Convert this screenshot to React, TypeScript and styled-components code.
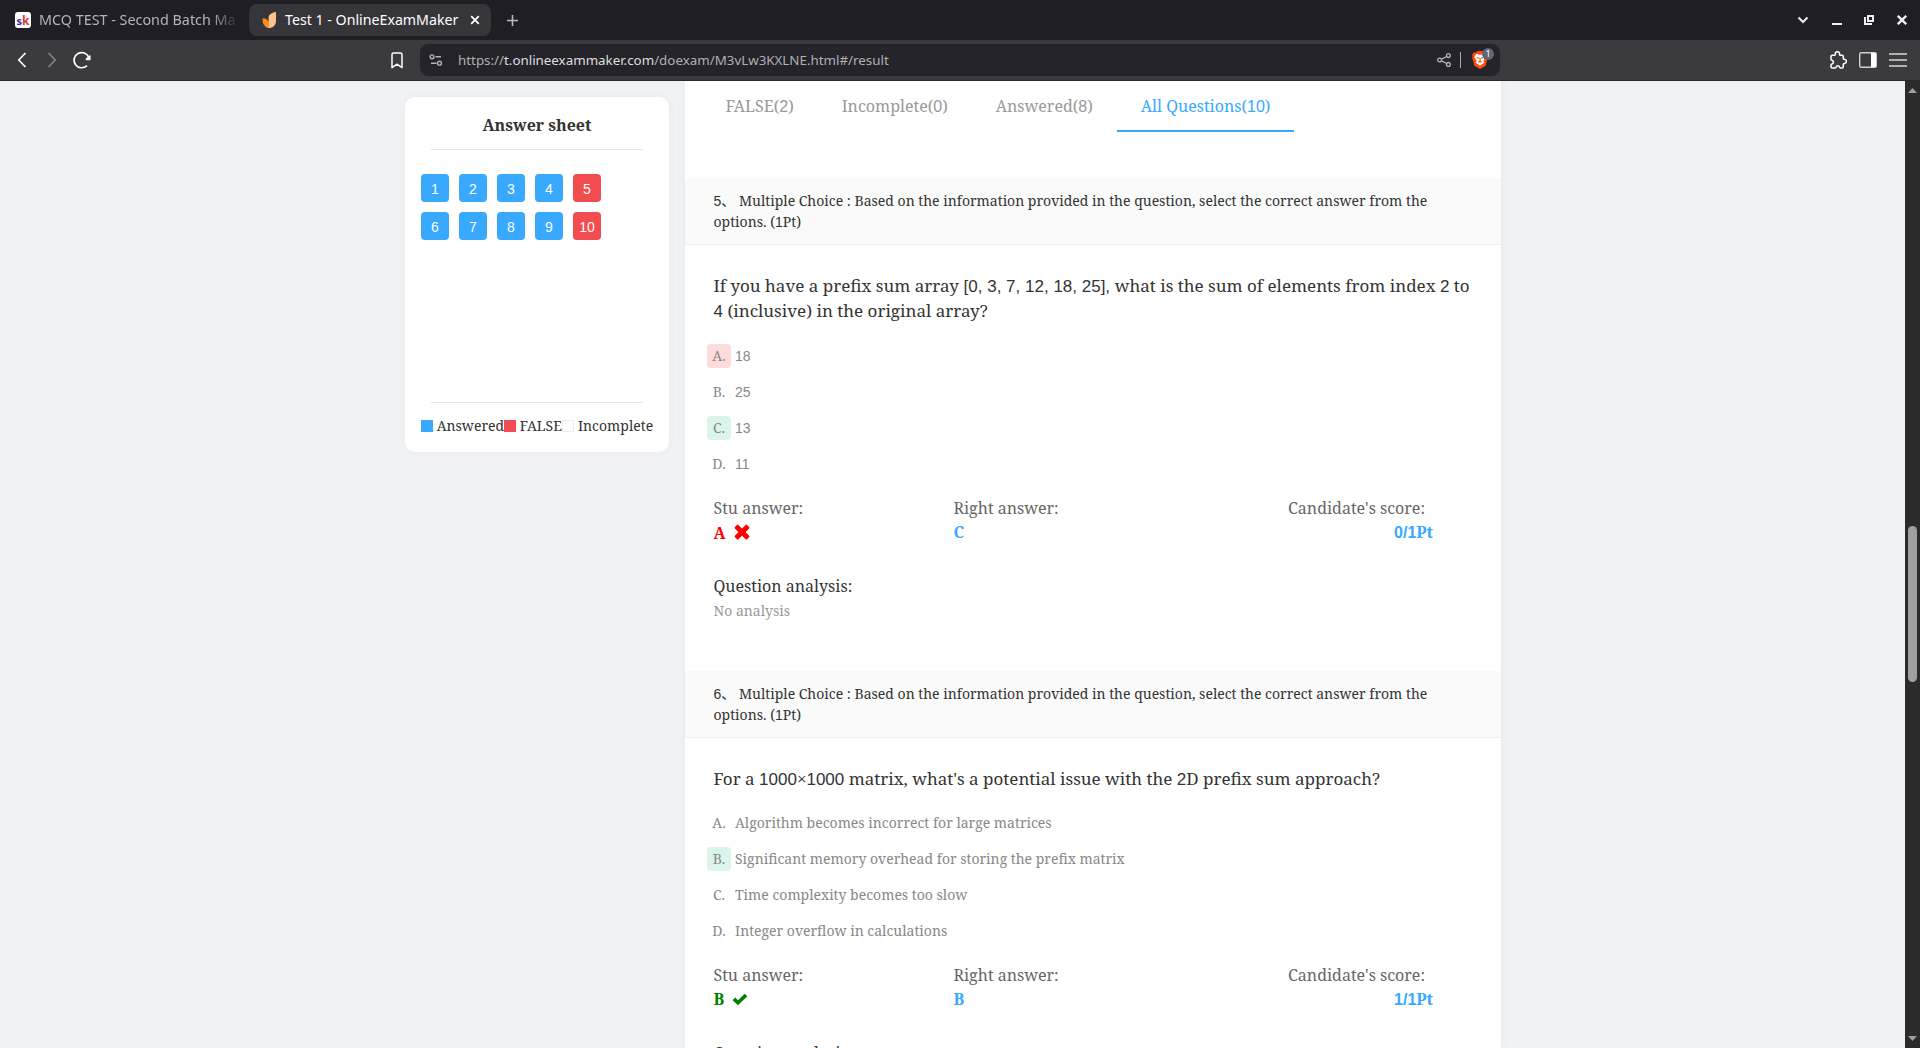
import React from "react";
import styled, { createGlobalStyle } from "styled-components";

const SERIF = `"Noto Serif", "Noto Sans CJK SC", serif`;
const SANS = `"Liberation Sans", Arial, sans-serif`;
const UI = `"Noto Sans", sans-serif`;

const GlobalStyle = createGlobalStyle`
  *, *::before, *::after { box-sizing: border-box; }
  body { margin: 0; overflow: hidden; background: #f0f2f5; }
`;

const Window = styled.div`
  width: 1920px;
  height: 1048px;
  display: flex;
  flex-direction: column;
  overflow: hidden;
  font-family: ${SERIF};
  color: #333;
`;

/* ---------- browser chrome ---------- */

const TabStrip = styled.div`
  flex: none;
  height: 40px;
  display: flex;
  align-items: center;
  background: #1f1e24;
  font-family: ${UI};
`;

const Tab = styled.div<{ $active?: boolean }>`
  width: ${p => (p.$active ? "242px" : "249px")};
  height: 32px;
  padding-left: ${p => (p.$active ? "13px" : "15px")};
  display: flex;
  align-items: center;
  border-radius: 8px;
  background: ${p => (p.$active ? "#363539" : "transparent")};
  svg { flex: none; }
`;

const TabTitle = styled.div<{ $active?: boolean }>`
  margin-left: 8px;
  width: ${p => (p.$active ? "177px" : "198px")};
  overflow: hidden;
  white-space: nowrap;
  font-size: ${p => (p.$active ? "14.2px" : "14.35px")};
  line-height: 24px;
  color: ${p => (p.$active ? "#fff" : "#b4b4b6")};
  mask-image: ${p => (p.$active ? "none" : "linear-gradient(to right, #000 172px, transparent 200px)")};
`;

const TabClose = styled.span`
  display: flex;
  margin-left: 7.5px;
`;

const NewTab = styled.span`
  display: flex;
  margin-left: 15.5px;
`;

const WindowControls = styled.div`
  margin-left: auto;
  padding-right: 13px;
  display: flex;
  align-items: center;
  gap: 22.6px;
  svg { display: block; }
`;

const Toolbar = styled.div`
  flex: none;
  height: 41px;
  display: flex;
  align-items: center;
  background: #3b3a3f;
  border-bottom: 1px solid #2a292d;
  svg { flex: none; display: block; }
`;

const NavButtons = styled.div`
  width: 391px;
  padding-left: 17px;
  display: flex;
  align-items: center;
  gap: 20px;
`;

const ReloadSlot = styled.span`
  display: flex;
  margin-left: -4px;
`;

const AddressBar = styled.div`
  width: 1080px;
  height: 32px;
  margin-left: 17px;
  padding: 0 6px 0 9px;
  display: flex;
  align-items: center;
  border-radius: 8px;
  background: #242329;
`;

const Url = styled.div`
  margin-left: 15px;
  flex: 1;
  font: 13.35px ${UI};
  color: #b0b0b3;
  white-space: nowrap;
`;

const UrlHost = styled.span`
  color: #dededf;
`;

const BarDivider = styled.span`
  width: 1px;
  height: 16px;
  margin: 0 11px 0 9px;
  background: #a8a8aa;
`;

const Shield = styled.span`
  position: relative;
  width: 22px;
  height: 18px;
`;

const ShieldBadge = styled.span`
  position: absolute;
  top: -3px;
  left: 10px;
  width: 12px;
  height: 12px;
  border-radius: 6px;
  background: #636573;
  color: #fff;
  font: 9px/12px ${UI};
  text-align: center;
`;

const ToolbarActions = styled.div`
  margin-left: auto;
  padding-right: 13px;
  display: flex;
  align-items: center;
  gap: 12px;
`;

/* ---------- page ---------- */

const Viewport = styled.div`
  flex: 1;
  min-height: 0;
  display: flex;
`;

const Page = styled.main`
  flex: 1;
  padding-left: 405px;
  display: flex;
  align-items: flex-start;
  gap: 16px;
  background: #f0f2f5;
  overflow: hidden;
`;

const SheetCard = styled.aside`
  width: 264px;
  height: 355px;
  margin-top: 16px;
  padding: 0 16px;
  display: flex;
  flex-direction: column;
  background: #fff;
  border-radius: 10px;
  box-shadow: 0 0 10px rgba(0, 0, 0, 0.04);
`;

const SheetTitle = styled.h2`
  margin: 0 10px;
  height: 53px;
  padding-top: 16px;
  border-bottom: 1px solid #e3e4e5;
  font-size: 16px;
  line-height: 24px;
  text-align: center;
`;

const NumberGrid = styled.div`
  flex: 1;
  padding-top: 24px;
  display: grid;
  grid-template-columns: repeat(5, 28px);
  grid-auto-rows: 28px;
  gap: 10px;
`;

const NumberCell = styled.span<{ $wrong?: boolean }>`
  display: flex;
  align-items: center;
  justify-content: center;
  padding-top: 2px;
  border-radius: 4px;
  background: ${p => (p.$wrong ? "#f24c51" : "#38a9ff")};
  color: #fff;
  font: 14px ${SANS};
`;

const LegendRule = styled.div`
  height: 1px;
  margin: 0 10px;
  background: #e3e4e5;
`;

const Legend = styled.div`
  height: 49px;
  display: flex;
  align-items: flex-start;
  padding-top: 11px;
  font-size: 14px;
  line-height: 24px;
  white-space: nowrap;
`;

const LegendItem = styled.span`
  display: flex;
  align-items: center;
`;

const Swatch = styled.i<{ $color: string; $outlined?: boolean }>`
  width: 12px;
  height: 12px;
  margin-right: ${p => (p.$outlined ? "4px" : "3.64px")};
  background: ${p => p.$color};
  border: ${p => (p.$outlined ? "1px solid #eee" : "none")};
`;

const Content = styled.section`
  width: 816px;
  height: 967px;
  overflow: hidden;
  background: #fff;
  box-shadow: 0 0 10px rgba(100, 80, 160, 0.05);
`;

const Tabs = styled.nav`
  height: 51px;
  margin-bottom: 46px;
  padding-left: 16.5px;
  display: flex;
`;

const TabLink = styled.span<{ $active?: boolean }>`
  padding: 13px 24px 0;
  font-size: 16px;
  line-height: 24px;
  color: ${p => (p.$active ? "#38a9ff" : "#999")};
  border-bottom: 2px solid ${p => (p.$active ? "#38a9ff" : "transparent")};
`;

const QuestionHeader = styled.header`
  padding: 12px 28px 12px 28.5px;
  background: #fafafa;
  border-bottom: 1px solid #efefef;
  font-size: 14px;
  line-height: 21px;
`;

const QuestionBody = styled.div`
  padding: 27.85px 28px 48px 28.5px;
`;

const QuestionText = styled.p`
  margin: 0;
  font-size: 17px;
  line-height: 25.5px;
`;

const Options = styled.ul`
  list-style: none;
  margin: 13.85px 0 14px;
  padding: 0;
`;

const Option = styled.li`
  height: 36px;
  margin-left: -6.5px;
  display: flex;
  align-items: center;
  gap: 4px;
  font-size: 14px;
  line-height: 24px;
  color: #888;
`;

const OptionLetter = styled.span<{ $mark?: "right" | "wrong" }>`
  width: 24px;
  height: 24px;
  text-align: center;
  border-radius: 4px;
  background: ${p => (p.$mark === "right" ? "#dcf5ea" : p.$mark === "wrong" ? "#fedcdc" : "transparent")};
`;

const Results = styled.div`
  display: flex;
  font-size: 16px;
  line-height: 24px;
`;

const ResultCell = styled.div<{ $last?: boolean }>`
  width: ${p => (p.$last ? "145px" : "240px")};
  margin-left: ${p => (p.$last ? "94.5px" : "0")};
`;

const ResultLabel = styled.div`
  color: #666;
`;

const ResultValue = styled.div<{ $color: string; $right?: boolean }>`
  height: 24px;
  display: flex;
  align-items: center;
  justify-content: ${p => (p.$right ? "flex-end" : "flex-start")};
  font-weight: 700;
  color: ${p => p.$color};
`;

const GivenLetter = styled.span<{ $lowered: boolean }>`
  padding-top: ${p => (p.$lowered ? "2px" : "0")};
  margin-right: ${p => (p.$lowered ? "8.5px" : "7.5px")};
`;

const Analysis = styled.div`
  margin-top: 30px;
  font-size: 16px;
  line-height: 24px;
`;

const NoAnalysis = styled.div`
  font-size: 14px;
  line-height: 25px;
  color: #999;
`;

const Digits = styled.span`
  font-family: ${SANS};
  line-height: 1;
`;

const Scrollbar = styled.div`
  width: 15px;
  padding: 7px 3px;
  display: flex;
  flex-direction: column;
  align-items: center;
  background: #2b2b2b;
`;

const Thumb = styled.div`
  width: 9px;
  height: 156px;
  margin-top: 433px;
  margin-bottom: auto;
  border-radius: 5px;
  background: #9f9f9f;
`;

const ScrollArrow = styled.span<{ $down?: boolean }>`
  width: 9px;
  height: 5px;
  background: #9f9f9f;
  clip-path: ${p => (p.$down ? "polygon(0 0, 100% 0, 50% 100%)" : "polygon(50% 0, 100% 100%, 0 100%)")};
`;

/** Renders numerals, with the separators of a numeric list, in the sans face and the rest in the serif one. */
function Mixed({ children }: { children: string }) {
  return (
    <>
      {children.split(/( \[[0-9, ]+\], |[0-9/]+)/).map((part, i) =>
        i % 2 ? <Digits key={i}>{part}</Digits> : part
      )}
    </>
  );
}

type Question = {
  no: number;
  text: string;
  options: string[];
  given: string;
  right: string;
};

const QUESTIONS: Question[] = [
  {
    no: 5,
    text: "If you have a prefix sum array [0, 3, 7, 12, 18, 25], what is the sum of elements from index 2 to 4 (inclusive) in the original array?",
    options: ["18", "25", "13", "11"],
    given: "A",
    right: "C",
  },
  {
    no: 6,
    text: "For a 1000×1000 matrix, what's a potential issue with the 2D prefix sum approach?",
    options: [
      "Algorithm becomes incorrect for large matrices",
      "Significant memory overhead for storing the prefix matrix",
      "Time complexity becomes too slow",
      "Integer overflow in calculations",
    ],
    given: "B",
    right: "B",
  },
];

const CrossMark = () => (
  <svg width="16" height="16" viewBox="0 0 16 16">
    <g fill="red">
      <rect x="-0.6" y="5.6" width="17.2" height="5" rx="1" transform="rotate(45 8 8.1)" />
      <rect x="-0.6" y="5.6" width="17.2" height="5" rx="1" transform="rotate(-45 8 8.1)" />
    </g>
  </svg>
);

const CheckMark = () => (
  <svg width="16" height="16" viewBox="0 0 16 16">
    <path d="M1.900 7.900 6 11.800 14 4" fill="none" stroke="green" strokeWidth="3.700" />
  </svg>
);

function QuestionView({ q }: { q: Question }) {
  const correct = q.given === q.right;
  return (
    <article>
      <QuestionHeader>
        <Mixed>{`${q.no}、 Multiple Choice : Based on the information provided in the question, select the correct answer from the options. (1Pt)`}</Mixed>
      </QuestionHeader>
      <QuestionBody>
        <QuestionText>
          <Mixed>{q.text}</Mixed>
        </QuestionText>
        <Options>
          {q.options.map((o, i) => {
            const letter = "ABCD"[i];
            const mark = letter === q.right ? "right" : letter === q.given ? "wrong" : undefined;
            return (
              <Option key={letter}>
                <OptionLetter $mark={mark}>{letter}.</OptionLetter>
                <span>
                  <Mixed>{o}</Mixed>
                </span>
              </Option>
            );
          })}
        </Options>
        <Results>
          <ResultCell>
            <ResultLabel>Stu answer:</ResultLabel>
            <ResultValue $color={correct ? "green" : "red"}>
              <GivenLetter $lowered={!correct}>{q.given}</GivenLetter>
              {correct ? <CheckMark /> : <CrossMark />}
            </ResultValue>
          </ResultCell>
          <ResultCell>
            <ResultLabel>Right answer:</ResultLabel>
            <ResultValue $color="#38a9ff">{q.right}</ResultValue>
          </ResultCell>
          <ResultCell $last>
            <ResultLabel>Candidate's score:</ResultLabel>
            <ResultValue $color="#38a9ff" $right>
              <span>
                <Mixed>{`${correct ? 1 : 0}/1Pt`}</Mixed>
              </span>
            </ResultValue>
          </ResultCell>
        </Results>
        <Analysis>
          Question analysis:
          <NoAnalysis>No analysis</NoAnalysis>
        </Analysis>
      </QuestionBody>
    </article>
  );
}

function Chrome() {
  return (
    <>
      <TabStrip>
        <Tab>
          <svg width="16" height="16" viewBox="0 0 16 16">
            <rect width="16" height="16" rx="3" fill="#fff" />
            <text x="1.4" y="12.6" fontFamily="Noto Sans" fontWeight="700" fontSize="11" fill="#2b2aa8">s</text>
            <text x="7" y="12.6" fontFamily="Noto Sans" fontWeight="700" fontSize="12" fill="#e23a2e">k</text>
          </svg>
          <TabTitle>MCQ TEST - Second Batch Ma</TabTitle>
        </Tab>
        <Tab $active>
          <svg width="15" height="16" viewBox="0 0 15 16">
            <path d="M14 0v9.500a6.500 6.500 0 0 1-6.500 6.400c-2.200 0-3.800-1-4.700-2.200C6 13.500 6.500 11.500 6.600 9V5.800C6.600 2.500 9.500.6 14 0z" fill="#fdc48a" />
            <path d="M.6 6.200c3.600.2 6.600 2.400 6.600 5.600 0 1.300-.5 2.600-1.300 3.600C2.700 14.500.6 12 .6 9z" fill="#fd8d1c" />
          </svg>
          <TabTitle $active>Test 1 - OnlineExamMaker</TabTitle>
          <TabClose>
            <svg width="10" height="10" viewBox="0 0 10 10" stroke="#fff" strokeWidth="1.800">
              <path d="M1.200 1.200l7.600 7.600M8.800 1.200l-7.600 7.600" />
            </svg>
          </TabClose>
        </Tab>
        <NewTab>
          <svg width="11" height="11" viewBox="0 0 11 11" stroke="#b9b9bb" strokeWidth="1.600">
            <path d="M5.500 0v11M0 5.500h11" />
          </svg>
        </NewTab>
        <WindowControls>
          <svg width="12" height="12" viewBox="0 0 12 12" fill="none" stroke="#eee" strokeWidth="2">
            <path d="M1.500 3.500 6 8l4.500-4.500" />
          </svg>
          <svg width="10" height="10" viewBox="0 0 10 10">
            <rect y="8" width="10" height="2" fill="#eee" />
          </svg>
          <svg width="10" height="10" viewBox="0 0 10 10" fill="none" stroke="#eee" strokeWidth="2">
            <path d="M4 1h5v5H4z" />
            <path d="M1 2v7h7" />
          </svg>
          <svg width="10" height="10" viewBox="0 0 10 10" stroke="#eee" strokeWidth="2.400">
            <path d="M.8.8l8.400 8.400M9.200.8.8 9.200" />
          </svg>
        </WindowControls>
      </TabStrip>
      <Toolbar>
        <NavButtons>
          <svg width="10" height="16" viewBox="0 0 10 16" fill="none" stroke="#fff" strokeWidth="1.700">
            <path d="M8.500 1 1.800 8l6.700 7" />
          </svg>
          <svg width="10" height="16" viewBox="0 0 10 16" fill="none" stroke="#88878b" strokeWidth="1.500">
            <path d="M1.500 1l6.700 7-6.700 7" />
          </svg>
          <ReloadSlot>
            <svg width="18" height="18" viewBox="0 0 18 18" fill="none" stroke="#fff" strokeWidth="1.700">
              <path d="M14 14.600A7.600 7.600 0 1 1 15.800 6.500" />
              <path d="M16.800 5v3.400h-3.400z" fill="#fff" strokeLinejoin="round" strokeWidth="1.600" />
            </svg>
          </ReloadSlot>
        </NavButtons>
        <svg width="12" height="17" viewBox="0 0 12 17" fill="none" stroke="#fff" strokeWidth="1.500">
          <path d="M1 2.500Q1 .9 2.600.9h6.800Q11 .9 11 2.500v13.100L6 12.200 1 15.600z" strokeLinejoin="round" />
        </svg>
        <AddressBar>
          <svg width="14" height="12" viewBox="0 0 14 12" fill="none" stroke="#b4b4b6" strokeWidth="1.400">
            <circle cx="3" cy="2.800" r="1.900" />
            <path d="M6.500 2.800H12M2 9.200h5.500" />
            <circle cx="10.500" cy="9.200" r="1.900" />
          </svg>
          <Url>
            https://<UrlHost>t.onlineexammaker.com</UrlHost>/doexam/M3vLw3KXLNE.html#/result
          </Url>
          <svg width="14" height="14" viewBox="0 0 14 14" fill="none" stroke="#b4b4b6" strokeWidth="1.300">
            <circle cx="2.600" cy="7" r="1.900" />
            <circle cx="11.400" cy="2.600" r="1.900" />
            <circle cx="11.400" cy="11.400" r="1.900" />
            <path d="M4.500 6.100 9.700 3.500M4.500 7.900l5.200 2.600" />
          </svg>
          <BarDivider />
          <Shield>
            <svg width="16" height="18" viewBox="0 0 16 18">
              <path d="M4 1.500 5.500 0h5L12 1.500l2-.2 2 2.500-.6 1.500.4 1.700-2.400 8L8 18l-5.400-3L.2 7l.4-1.700L0 3.800l2-2.500z" fill="#ff4a0a" />
              <path d="M4.200 3 8 3.800 11.800 3l2 3-2.400 3.800.7 2L8 14.800l-4.100-3 .7-2L2.200 6z" fill="#fff" />
              <path d="M4.800 6.500l2 .6M11.200 6.500l-2 .6M8 7v2.800M6.300 11.200 8 10.200l1.700 1" stroke="#ff4a0a" strokeWidth="1.200" fill="none" />
            </svg>
            <ShieldBadge>1</ShieldBadge>
          </Shield>
        </AddressBar>
        <ToolbarActions>
          <svg width="18" height="18" viewBox="0 0 18 18" fill="none" stroke="#fff" strokeWidth="1.500" strokeLinejoin="round">
            <path d="M3.200 4.200h2.400c.8 0 .6-.7.6-1.200a2.200 2.200 0 0 1 4.400 0c0 .5-.2 1.200.6 1.200h1.900c.8 0 1.200.4 1.200 1.200v2c0 .7.500.8 1 .8a2.100 2.100 0 0 1 0 4.200c-.5 0-1 .1-1 .8v2.600c0 .8-.4 1.200-1.200 1.200h-1.700c-.8 0-.8-.5-.9-1a1.700 1.700 0 0 0-3.300 0c-.1.5-.1 1-.9 1H3.200c-.8 0-1.200-.4-1.200-1.200v-1.900c0-.7.500-.9 1-1a1.900 1.900 0 0 0 0-3.700c-.5-.1-1-.3-1-1V5.400c0-.8.400-1.200 1.200-1.200z" />
          </svg>
          <svg width="18" height="16" viewBox="0 0 18 16">
            <rect x=".7" y=".7" width="16.600" height="14.600" rx="1.500" fill="none" stroke="#d0d0d2" strokeWidth="1.400" />
            <rect x="12" y="1" width="5" height="14" fill="#fff" />
          </svg>
          <svg width="18" height="14" viewBox="0 0 18 14" stroke="#d8d8da" strokeWidth="1.500">
            <path d="M0 1h18M0 7h18M0 13h18" />
          </svg>
        </ToolbarActions>
      </Toolbar>
    </>
  );
}

export default function App() {
  return (
    <Window>
      <GlobalStyle />
      <Chrome />
      <Viewport>
        <Page>
          <SheetCard>
            <SheetTitle>Answer sheet</SheetTitle>
            <NumberGrid>
              {Array.from({ length: 10 }, (_, i) => i + 1).map(n => (
                <NumberCell key={n} $wrong={n % 5 === 0}>
                  {n}
                </NumberCell>
              ))}
            </NumberGrid>
            <LegendRule />
            <Legend>
              <LegendItem>
                <Swatch $color="#38a9ff" />
                Answered
              </LegendItem>
              <LegendItem>
                <Swatch $color="#f24c51" />
                FALSE
              </LegendItem>
              <LegendItem>
                <Swatch $color="#fff" $outlined />
                Incomplete
              </LegendItem>
            </Legend>
          </SheetCard>
          <Content>
            <Tabs>
              <TabLink><Mixed>FALSE(2)</Mixed></TabLink>
              <TabLink><Mixed>Incomplete(0)</Mixed></TabLink>
              <TabLink><Mixed>Answered(8)</Mixed></TabLink>
              <TabLink $active><Mixed>All Questions(10)</Mixed></TabLink>
            </Tabs>
            {QUESTIONS.map(q => (
              <QuestionView key={q.no} q={q} />
            ))}
          </Content>
        </Page>
        <Scrollbar>
          <ScrollArrow />
          <Thumb />
          <ScrollArrow $down />
        </Scrollbar>
      </Viewport>
    </Window>
  );
}
